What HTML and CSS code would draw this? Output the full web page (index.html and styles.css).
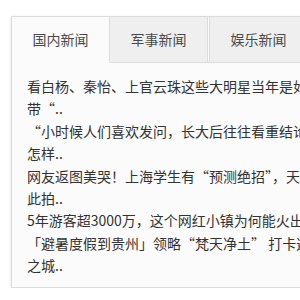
FILE: index.html
```html
<!DOCTYPE html>
<html lang="zh-CN">

<head>
    <meta charset="UTF-8">
    <meta name="viewport" content="width=device-width, initial-scale=1.0">
    <title>新闻选项卡</title>
    <link rel="stylesheet" href="styles.css">
</head>

<body>
<div class="box">
    <ul class="tabs">
        <li class="tab current">国内新闻</li>
        <li class="tab">军事新闻</li>
        <li class="tab">娱乐新闻</li>
    </ul>
    <div class="panel">
        <ul class="news">
            <li>看白杨、秦怡、上官云珠这些大明星当年是如何带“..</li>
            <li>“小时候人们喜欢发问，长大后往往看重结论该怎样..</li>
            <li>网友返图美哭！上海学生有“预测绝招”，天就此拍..</li>
            <li>5年游客超3000万，这个网红小镇为何能火出..</li>
            <li>「避暑度假到贵州」领略“梵天净土” 打卡避暑之城..</li>
        </ul>
    </div>
</div>
</body>

</html>
```

FILE: styles.css
```css
* {
    padding: 0;
    margin: 0;
}

body {
    overflow: hidden;
    background-color: #fff;
    font-family: "Microsoft YaHei", "Noto Sans CJK SC", sans-serif;
}

ul {
    list-style: none;
}

.box {
    width: 330px;
    margin: 16px 0 0 11px;
    border: 1px solid #dcdcdc;
    background-color: #fbfbfb;
    box-shadow: 0 1px 3px rgba(0, 0, 0, 0.12);
}

.tabs {
    display: flex;
    border-bottom: 1px solid #dcdcdc;
}

.tab {
    width: 97px;
    height: 45px;
    margin-bottom: -1px;
    line-height: 45px;
    text-align: center;
    font-size: 14px;
    color: #4a4a4a;
    background-color: #efefef;
    border-right: 1px solid #dcdcdc;
    border-bottom: 1px solid #dcdcdc;
    cursor: pointer;
}

.tab:last-child {
    margin-left: 1px;
    border-left: 1px solid #dcdcdc;
}

.tab.current {
    background-color: #fbfbfb;
    border-bottom-color: #fbfbfb;
}

.panel {
    padding: 12px 15px 10px;
}

.news li {
    font-size: 14px;
    line-height: 22.4px;
    color: #333;
}
```
